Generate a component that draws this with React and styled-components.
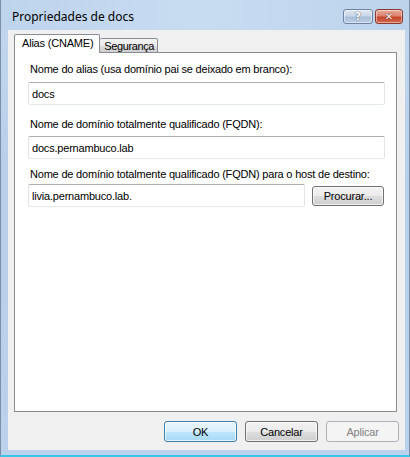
import React from "react";
import styled, { createGlobalStyle } from "styled-components";

const Global = createGlobalStyle`
  html, body { margin: 0; padding: 0; background: #bcd3ec; }
  body { width: 410px; height: 457px; overflow: hidden; }
  * { box-sizing: border-box; }
`;

const Window = styled.div`
  width: 410px;
  height: 457px;
  display: flex;
  flex-direction: column;
  background: linear-gradient(to bottom, #c3d8ef 0%, #b7cfea 40%, #bad2ec 100%);
  border-left: 1px solid #7b8ea5;
  border-right: 1px solid #7b8ea5;
  border-bottom: 2px solid #3ac6e8;
  font-family: "Liberation Sans", Arial, sans-serif;
  letter-spacing: -0.2px;
`;

const TitleBar = styled.div`
  height: 30px;
  display: flex;
  align-items: center;
  padding: 0 6px 0 11px;
  background: linear-gradient(to right, #bed4ed 0%, #c8dcf1 50%, #bcd3ec 100%);
`;

const Title = styled.div`
  flex: 1;
  font-family: "Noto Sans", "Open Sans", sans-serif;
  font-size: 12px;
  letter-spacing: 0;
  color: #000;
  padding-top: 2px;
`;

const CaptionButtons = styled.div`
  display: flex;
  gap: 2px;
  align-self: flex-start;
  margin-top: 9px;
`;

const CaptionButton = styled.div`
  width: ${(p) => (p.$close ? "28px" : "30px")};
  height: 15px;
  border: 1px solid ${(p) => (p.$close ? "#8a3a2d" : "#6f83a0")};
  border-radius: 3px;
  background: ${(p) =>
    p.$close
      ? "linear-gradient(to bottom, #e9a99b 0%, #dc8471 45%, #c6452c 55%, #d16a4e 100%)"
      : "linear-gradient(to bottom, #dfe8f3 0%, #c7d6e8 45%, #a9bfd9 55%, #bccde3 100%)"};
  display: flex;
  align-items: center;
  justify-content: center;
  color: #fff;
  font-family: "DejaVu Sans", sans-serif;
  font-weight: bold;
  font-size: ${(p) => (p.$close ? "10px" : "11px")};
  line-height: 1;
  letter-spacing: 0;
  text-shadow: ${(p) =>
    p.$close
      ? "0 0 1px #6a2418, 0 0 1px #6a2418"
      : "0 0 1px #4b5a70, 0 0 1px #4b5a70"};
  box-shadow: inset 0 0 0 1px rgba(255, 255, 255, 0.45);
`;

const Client = styled.div`
  flex: 1;
  margin: 0 4px 5px 7px;
  background: #f0f0f0;
  display: flex;
  flex-direction: column;
  padding: 4px 6px 8px 6px;
`;

const TabStrip = styled.div`
  display: flex;
  align-items: flex-end;
  height: 19px;
  position: relative;
  z-index: 1;
  margin-bottom: -1px;
`;

const Tab = styled.div`
  height: ${(p) => (p.$active ? "19px" : "15px")};
  padding: ${(p) => (p.$active ? "2px 6px 0 7px" : "1px 3px 0 4px")};
  border: 1px solid #898c95;
  border-bottom: ${(p) => (p.$active ? "none" : "1px solid #898c95")};
  border-left: ${(p) => (p.$last ? "none" : "1px solid #898c95")};
  border-radius: 2px 2px 0 0;
  background: ${(p) =>
    p.$active ? "#ffffff" : "linear-gradient(to bottom, #f2f2f2 0%, #ebebeb 50%, #dddddd 51%, #cfcfcf 100%)"};
  font-size: 11px;
  letter-spacing: ${(p) => (p.$last ? "-0.4px" : "-0.2px")};
  color: #000;
  white-space: nowrap;
`;

const Panel = styled.div`
  flex: 1;
  margin-right: 2px;
  background: #fff;
  border: 1px solid #898c95;
  padding: 10px 11px 0 13px;
  display: flex;
  flex-direction: column;
`;

const Field = styled.div`
  display: flex;
  flex-direction: column;
  margin-bottom: ${(p) => p.$mb ?? 9}px;
`;

const Label = styled.div`
  font-size: 11px;
  color: #000;
  padding-left: 2px;
  height: 13px;
  line-height: 13px;
  margin-bottom: ${(p) => p.$mb ?? 6}px;
  white-space: nowrap;
`;

const Row = styled.div`
  display: flex;
  align-items: center;
  gap: 7px;
`;

const Input = styled.div`
  width: ${(p) => (p.$w ? p.$w + "px" : "100%")};
  flex: none;
  height: 23px;
  border: 1px solid #e2e3ea;
  border-top-color: #abadb3;
  border-bottom-color: #e3e9ef;
  border-radius: 2px;
  background: #fff;
  display: flex;
  align-items: center;
  padding-left: 3px;
  font-size: 11px;
  color: #000;
`;

const Button = styled.div`
  width: ${(p) => p.$w || 73}px;
  height: ${(p) => p.$h || 21}px;
  border: 1px solid ${(p) => (p.$default ? "#3c7fb1" : p.$disabled ? "#adb2b5" : "#707070")};
  border-radius: 3px;
  background: ${(p) =>
    p.$default
      ? "linear-gradient(to bottom, #eaf6fd 0%, #d9f0fc 50%, #bee6fd 51%, #a7d9f5 100%)"
      : p.$disabled
      ? "#f4f4f4"
      : "linear-gradient(to bottom, #f2f2f2 0%, #ebebeb 50%, #dddddd 51%, #cfcfcf 100%)"};
  box-shadow: inset 0 0 0 1px ${(p) => (p.$disabled ? "transparent" : "rgba(255,255,255,0.7)")};
  display: flex;
  align-items: center;
  justify-content: center;
  font-size: 11px;
  color: ${(p) => (p.$disabled ? "#838383" : "#000")};
`;

const Footer = styled.div`
  display: flex;
  justify-content: flex-end;
  gap: 8px;
  padding-top: 9px;
`;

export default function App() {
  return (
    <>
      <Global />
      <Window>
        <TitleBar>
          <Title>Propriedades de docs</Title>
          <CaptionButtons>
            <CaptionButton>?</CaptionButton>
            <CaptionButton $close>✕</CaptionButton>
          </CaptionButtons>
        </TitleBar>
        <Client>
          <TabStrip>
            <Tab $active>Alias (CNAME)</Tab>
            <Tab $last>Segurança</Tab>
          </TabStrip>
          <Panel>
            <Field $mb={13}>
              <Label>Nome do alias (usa domínio pai se deixado em branco):</Label>
              <Input>docs</Input>
            </Field>
            <Field $mb={9}>
              <Label $mb={5}>Nome de domínio totalmente qualificado (FQDN):</Label>
              <Input>docs.pernambuco.lab</Input>
            </Field>
            <Field>
              <Label $mb={3}>Nome de domínio totalmente qualificado (FQDN) para o host de destino:</Label>
              <Row>
                <Input $w={277}>livia.pernambuco.lab.</Input>
                <Button $w={72} $h={20}>Procurar...</Button>
              </Row>
            </Field>
          </Panel>
          <Footer>
            <Button $default>OK</Button>
            <Button>Cancelar</Button>
            <Button $disabled>Aplicar</Button>
          </Footer>
        </Client>
      </Window>
    </>
  );
}
